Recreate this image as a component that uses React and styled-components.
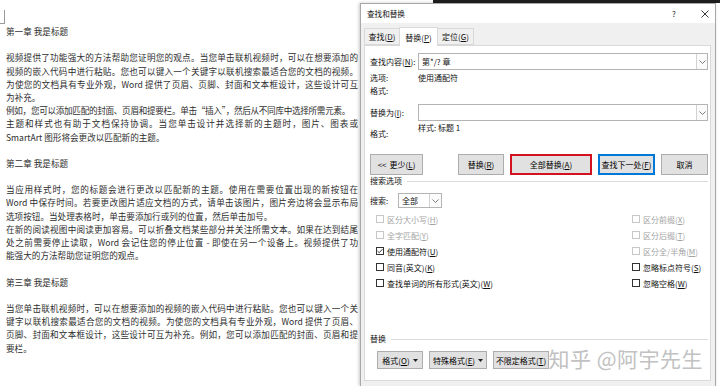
import styled, { createGlobalStyle } from "styled-components";

const GlobalStyle = createGlobalStyle`
  html, body { margin: 0; padding: 0; background: #fff; }
  body { font-family: "Noto Sans CJK SC", "Noto Sans", sans-serif; }
  * { box-sizing: border-box; }
`;

const Screen = styled.div`
  position: relative;
  display: flex;
  width: 720px;
  height: 386px;
  overflow: hidden;
  background: #fff;
`;

/* ---------- document page ---------- */

const Page = styled.section`
  position: relative;
  flex: none;
  width: 358px;
  padding: 25px 0 0 6px;
  font-size: 8.6px;
  line-height: 13.2px;
  color: #2e2e2e;
  &::before {
    content: "";
    position: absolute;
    left: 0;
    top: 10px;
    width: 4px;
    height: 13px;
    border-right: 1px solid #9a9a9a;
    border-bottom: 1px solid #9a9a9a;
  }
`;

const Line = styled.div`
  height: 13.2px;
  overflow: hidden;
  white-space: ${(p) => (p.$kind === "j" ? "normal" : "nowrap")};
  letter-spacing: ${(p) => (p.$kind === "s" ? "-0.3px" : "normal")};
  text-align: ${(p) => (p.$kind === "j" ? "justify" : "left")};
  text-align-last: ${(p) => (p.$kind === "j" ? "justify" : "auto")};
`;

const doc = [
  ["l", "第一章  我是标题"],
  ["l", ""],
  ["j", "视频提供了功能强大的方法帮助您证明您的观点。当您单击联机视频时，可以在想要添加的"],
  ["j", "视频的嵌入代码中进行粘贴。您也可以键入一个关键字以联机搜索最适合您的文档的视频。"],
  ["j", "为使您的文档具有专业外观，Word 提供了页眉、页脚、封面和文本框设计，这些设计可互"],
  ["l", "为补充。"],
  ["s", "例如，您可以添加匹配的封面、页眉和提要栏。单击“插入”，然后从不同库中选择所需元素。"],
  ["j", "主题和样式也有助于文档保持协调。当您单击设计并选择新的主题时，图片、图表或"],
  ["l", "SmartArt 图形将会更改以匹配新的主题。"],
  ["l", ""],
  ["l", "第二章  我是标题"],
  ["l", ""],
  ["j", "当应用样式时，您的标题会进行更改以匹配新的主题。使用在需要位置出现的新按钮在"],
  ["j", "Word 中保存时间。若要更改图片适应文档的方式，请单击该图片，图片旁边将会显示布局"],
  ["l", "选项按钮。当处理表格时，单击要添加行或列的位置，然后单击加号。"],
  ["j", "在新的阅读视图中阅读更加容易。可以折叠文档某些部分并关注所需文本。如果在达到结尾"],
  ["j", "处之前需要停止读取，Word 会记住您的停止位置 - 即使在另一个设备上。视频提供了功"],
  ["l", "能强大的方法帮助您证明您的观点。"],
  ["l", ""],
  ["l", "第三章  我是标题"],
  ["l", ""],
  ["j", "当您单击联机视频时，可以在想要添加的视频的嵌入代码中进行粘贴。您也可以键入一个关"],
  ["j", "键字以联机搜索最适合您的文档的视频。为使您的文档具有专业外观，Word 提供了页眉、"],
  ["j", "页脚、封面和文本框设计，这些设计可互为补充。例如，您可以添加匹配的封面、页眉和提"],
  ["l", "要栏。"],
];

/* ---------- dialog ---------- */

const DialogSide = styled.div`
  flex: 1;
  display: flex;
  flex-direction: column;
  padding: 0 4px 0 2px;
`;

const TopStrip = styled.div`
  height: 3px;
  margin: 0 -4px 0 -2px;
  background: linear-gradient(90deg, #fff 0 75px, #1f1f1f 75px);
`;

const Dialog = styled.div`
  flex: 1;
  display: flex;
  flex-direction: column;
  border: 1px solid #a8a8a8;
  border-bottom: none;
  background: #f0f0f0;
  box-shadow: -1px 0 3px rgba(0, 0, 0, 0.22);
  font-size: 8px;
  color: #111;
`;

const TitleBar = styled.div`
  height: 19px;
  display: flex;
  align-items: center;
  padding-left: 6px;
  background: #fff;
  font-size: 7.6px;
`;

const Title = styled.span`
  flex: 1;
`;

const TitleButton = styled.span`
  width: 20px;
  display: flex;
  justify-content: center;
  align-items: center;
  margin-left: ${(p) => p.$gap || 0}px;
  font-size: 8px;
  color: #222;
`;

const Body = styled.div`
  flex: 1;
  display: flex;
  flex-direction: column;
  padding: 4px 4px 5px 3px;
`;

const TabRow = styled.div`
  height: 18px;
  display: flex;
  align-items: flex-end;
`;

const Tab = styled.div`
  position: relative;
  z-index: ${(p) => (p.$active ? 1 : 0)};
  width: ${(p) => p.$w}px;
  height: ${(p) => (p.$active ? 19 : 17)}px;
  margin-bottom: ${(p) => (p.$active ? -1 : 0)}px;
  display: flex;
  align-items: center;
  justify-content: center;
  background: ${(p) => (p.$active ? "#fff" : "#f0f0f0")};
  border: 1px solid #d9d9d9;
  border-bottom: ${(p) => (p.$active ? "none" : "1px solid #d9d9d9")};
  margin-left: ${(p) => (p.$active ? -1 : 0)}px;
  margin-right: ${(p) => (p.$active ? -1 : 0)}px;
`;

const Panel = styled.div`
  flex: 1;
  display: flex;
  flex-direction: column;
  background: #fff;
  border: 1px solid #d9d9d9;
  padding: 7px 2px 0 5px;
`;

const FieldRow = styled.div`
  height: 17px;
  margin-top: ${(p) => p.$top || 0}px;
  display: flex;
  align-items: center;
`;

const Label = styled.span`
  flex: none;
  width: ${(p) => p.$w || 48}px;
  align-self: ${(p) => p.$align || "center"};
  line-height: 12px;
`;

const Combo = styled.div`
  flex: 1;
  height: 100%;
  display: flex;
  border: 1px solid #b4b4b4;
  background: #fff;
`;

const ComboText = styled.span`
  flex: 1;
  padding-left: 3px;
  display: flex;
  align-items: center;
`;

const ComboArrow = styled.span`
  width: ${(p) => p.$w || 11}px;
  display: flex;
  align-items: center;
  justify-content: center;
  border-left: 1px solid #d2d2d2;
  background: #fbfbfb;
`;

const InfoRow = styled.div`
  height: ${(p) => p.$h || 12}px;
  margin-top: ${(p) => p.$top || 0}px;
  display: flex;
  line-height: 12px;
`;

const Value = styled.span`
  align-self: ${(p) => p.$align || "center"};
  line-height: 12px;
`;

const ButtonRow = styled.div`
  height: ${(p) => p.$h}px;
  margin-top: ${(p) => p.$top}px;
  padding-left: ${(p) => p.$indent || 0}px;
  display: flex;
  gap: 6px;
`;

const Spacer = styled.span`
  flex: 1;
`;

const Button = styled.button`
  width: ${(p) => p.$w}px;
  height: 100%;
  padding: 0;
  display: flex;
  align-items: center;
  justify-content: center;
  gap: 3px;
  font: inherit;
  white-space: nowrap;
  color: #000;
  background: #e1e1e1;
  border: ${(p) =>
    p.$mark === "red"
      ? "2px solid #d3121f"
      : p.$mark === "blue"
      ? "1px solid #0078d7"
      : "1px solid #adadad"};
  box-shadow: ${(p) => (p.$mark === "blue" ? "inset 0 0 0 1px #0078d7" : "none")};
`;

const Key = styled.span`
  text-decoration: underline;
`;

const Legend = styled.div`
  height: 12px;
  margin-top: ${(p) => p.$top || 0}px;
  display: flex;
  align-items: center;
  gap: 5px;
  line-height: 12px;
  &::after {
    content: "";
    flex: 1;
    height: 1px;
    background: #dcdcdc;
  }
`;

const SearchRow = styled.div`
  height: 15px;
  margin-top: 6px;
  display: flex;
  align-items: center;
`;

const Select = styled.div`
  width: 44px;
  height: 100%;
  display: flex;
  border: 1px solid #b4b4b4;
  background: #fff;
`;

const OptionGrid = styled.div`
  margin-top: 3px;
  padding-left: 6px;
  display: grid;
  grid-template-columns: 256px 1fr;
  grid-auto-rows: 16px;
`;

const Option = styled.label`
  display: flex;
  align-items: center;
  gap: 3px;
  color: ${(p) => (p.$disabled ? "#a3a3a3" : "#111")};
`;

const Box = styled.span`
  width: 8px;
  height: 8px;
  flex: none;
  display: flex;
  align-items: center;
  justify-content: center;
  border: 1px solid ${(p) => (p.$disabled ? "#c8c8c8" : "#333")};
  background: #fff;
`;

const Watermark = styled.div`
  position: absolute;
  right: 17px;
  top: 345px;
  font-size: 21px;
  line-height: 26px;
  letter-spacing: 0.5px;
  color: #c2c2c2;
  text-shadow: 0 0 1px #fff, 0 0 2px #fff, 1px 1px 0 #fff;
`;

const Chevron = () => (
  <svg width="7" height="4" viewBox="0 0 7 4">
    <path d="M0.5 0.5 L3.5 3.5 L6.5 0.5" fill="none" stroke="#6b6b6b" strokeWidth="0.9" />
  </svg>
);

const Caret = () => (
  <svg width="5" height="3" viewBox="0 0 5 3">
    <path d="M0 0 H5 L2.5 3 Z" fill="#222" />
  </svg>
);

const Check = () => (
  <svg width="7" height="6" viewBox="0 0 7 6">
    <path d="M0.6 3 L2.6 5 L6.4 0.8" fill="none" stroke="#222" strokeWidth="1" />
  </svg>
);

const Cross = () => (
  <svg width="8" height="8" viewBox="0 0 8 8">
    <path d="M0.5 0.5 L7.5 7.5 M7.5 0.5 L0.5 7.5" stroke="#222" strokeWidth="0.9" />
  </svg>
);

const options = [
  ["区分大小写", "H", true, false],
  ["区分前缀", "X", true, false],
  ["全字匹配", "Y", true, false],
  ["区分后缀", "T", true, false],
  ["使用通配符", "U", false, true],
  ["区分全/半角", "M", true, false],
  ["同音(英文)", "K", false, false],
  ["忽略标点符号", "S", false, false],
  ["查找单词的所有形式(英文)", "W", false, false],
  ["忽略空格", "W", false, false],
];

const Accel = ({ text, k }) => (
  <span>
    {text}(<Key>{k}</Key>)
  </span>
);

export default function App() {
  return (
    <Screen>
      <GlobalStyle />
      <Page>
        {doc.map(([kind, text], i) => (
          <Line key={i} $kind={kind}>
            {text || "\u00a0"}
          </Line>
        ))}
      </Page>

      <DialogSide>
        <TopStrip />
        <Dialog>
          <TitleBar>
            <Title>查找和替换</Title>
            <TitleButton>?</TitleButton>
            <TitleButton $gap={11}>
              <Cross />
            </TitleButton>
          </TitleBar>
          <Body>
            <TabRow>
              <Tab $w={36}>
                <Accel text="查找" k="D" />
              </Tab>
              <Tab $w={39} $active>
                <Accel text="替换" k="P" />
              </Tab>
              <Tab $w={37}>
                <Accel text="定位" k="G" />
              </Tab>
            </TabRow>
            <Panel>
              <FieldRow>
                <Label>
                  查找内容(<Key>N</Key>):
                </Label>
                <Combo>
                  <ComboText>第*/? 章</ComboText>
                  <ComboArrow>
                    <Chevron />
                  </ComboArrow>
                </Combo>
              </FieldRow>
              <InfoRow $top={2}>
                <Label>选项:</Label>
                <Value>使用通配符</Value>
              </InfoRow>
              <InfoRow $top={1}>
                <Label>格式:</Label>
              </InfoRow>

              <FieldRow $top={7}>
                <Label>
                  替换为(<Key>I</Key>):
                </Label>
                <Combo>
                  <ComboText />
                  <ComboArrow>
                    <Chevron />
                  </ComboArrow>
                </Combo>
              </FieldRow>
              <InfoRow $top={1} $h={18}>
                <Label $align="flex-end">格式:</Label>
                <Value $align="flex-start">样式: 标题 1</Value>
              </InfoRow>

              <ButtonRow $h={21} $top={14}>
                <Button $w={53}>
                  {"<< "}
                  <Accel text="更少" k="L" />
                </Button>
                <Spacer />
                <Button $w={46}>
                  <Accel text="替换" k="R" />
                </Button>
                <Button $w={82} $mark="red">
                  <Accel text="全部替换" k="A" />
                </Button>
                <Button $w={57} $mark="blue">
                  <Accel text="查找下一处" k="F" />
                </Button>
                <Button $w={47}>取消</Button>
              </ButtonRow>

              <Legend>搜索选项</Legend>
              <SearchRow>
                <Label $w={28}>搜索:</Label>
                <Select>
                  <ComboText>全部</ComboText>
                  <ComboArrow $w={12}>
                    <Chevron />
                  </ComboArrow>
                </Select>
              </SearchRow>

              <OptionGrid>
                {options.map(([text, k, disabled, checked], i) => (
                  <Option key={i} $disabled={disabled}>
                    <Box $disabled={disabled}>{checked && <Check />}</Box>
                    <Accel text={text} k={k} />
                  </Option>
                ))}
              </OptionGrid>

              <Legend $top={42}>替换</Legend>
              <ButtonRow $h={18} $top={6} $indent={7}>
                <Button $w={46}>
                  <Accel text="格式" k="O" />
                  <Caret />
                </Button>
                <Button $w={58}>
                  <Accel text="特殊格式" k="E" />
                  <Caret />
                </Button>
                <Button $w={56}>
                  <Accel text="不限定格式" k="T" />
                </Button>
              </ButtonRow>
            </Panel>
          </Body>
        </Dialog>
      </DialogSide>

      <Watermark>知乎 @阿宇先生</Watermark>
    </Screen>
  );
}
